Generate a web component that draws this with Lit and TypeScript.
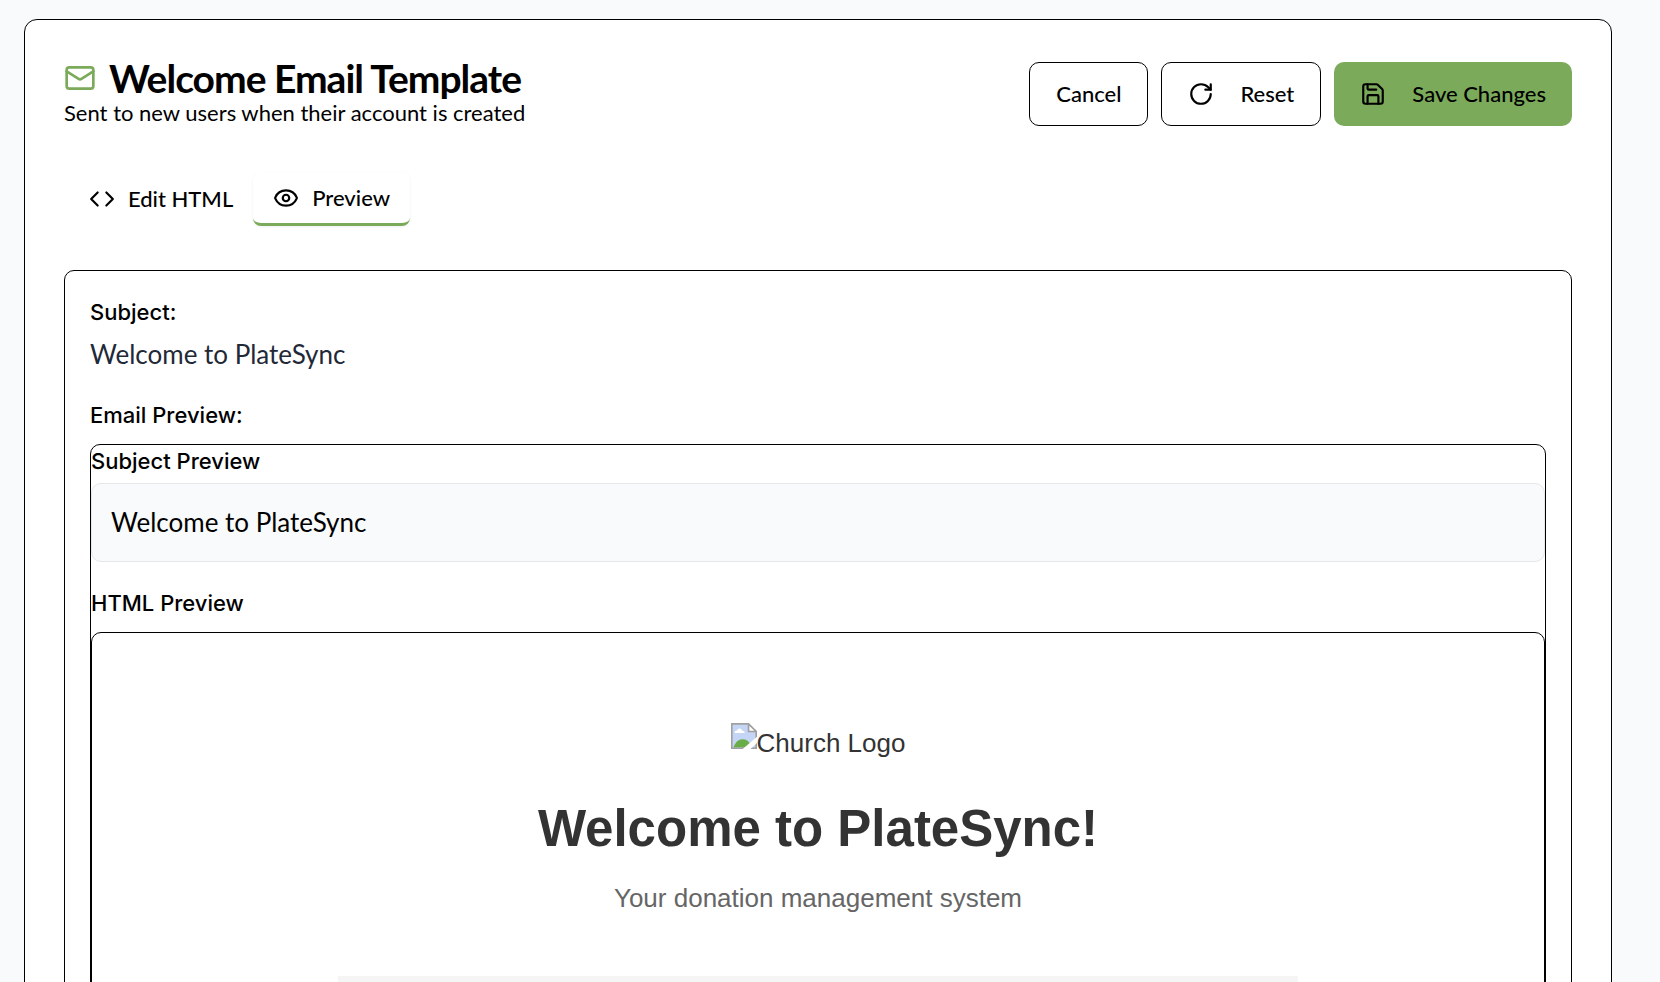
import { LitElement, html, css, svg } from "lit";
import { customElement, state } from "lit/decorators.js";

const stroked = (size: string, body: unknown) => html`
  <svg class="icon ${size}" viewBox="0 0 24 24" fill="none" stroke="currentColor" stroke-width="2"
    stroke-linecap="round" stroke-linejoin="round" aria-hidden="true">${body}</svg>`;

const mail = svg`<rect width="20" height="16" x="2" y="4" rx="2"/><path d="m22 7-8.97 5.7a1.94 1.94 0 0 1-2.06 0L2 7"/>`;
const code = svg`<path d="m16 18 6-6-6-6"/><path d="m8 6-6 6 6 6"/>`;
const eye = svg`<path d="M2.062 12.348a1 1 0 0 1 0-.696 10.75 10.75 0 0 1 19.876 0 1 1 0 0 1 0 .696 10.75 10.75 0 0 1-19.876 0"/><circle cx="12" cy="12" r="3"/>`;
const rotate = svg`<path d="M21 12a9 9 0 1 1-9-9c2.52 0 4.93 1 6.74 2.74L21 8"/><path d="M21 3v5h-5"/>`;
const save = svg`<path d="M15.2 3a2 2 0 0 1 1.4.6l3.8 3.8a2 2 0 0 1 .6 1.4V19a2 2 0 0 1-2 2H5a2 2 0 0 1-2-2V5a2 2 0 0 1 2-2z"/><path d="M17 21v-7a1 1 0 0 0-1-1H8a1 1 0 0 0-1 1v7"/><path d="M7 3v4a1 1 0 0 0 1 1h7"/>`;

@customElement("email-preview")
export class EmailPreview extends LitElement {
  static styles = css`
    :host {
      display: block;
      padding: 90px 32px 0;
      font-family: "Liberation Sans", Arial, sans-serif;
      font-size: 26px;
      line-height: 40px;
      color: #333;
      text-align: center;
    }
    .logo { display: flex; justify-content: center; align-items: flex-start; }
    .missing { width: 26px; height: 26px; flex: none; }
    h2 { margin: 25px 0 0; font-size: 51px; line-height: 82px; font-weight: 700; }
    .tagline { margin: 8px 0 0; color: #666; }
    .content { max-width: 960px; height: 320px; margin: 58px auto 0; background: #f5f5f5; }
  `;

  render() {
    return html`
      <div class="logo">
        <svg class="missing" viewBox="0 0 16 16" aria-hidden="true">
          <path d="M.5.5h10.300l4.700 4.700v10.300H.5z" fill="#c5d5f5"/>
          <path d="M2.200 6.200c0-1.100.8-1.600 1.500-1.500.3-1.700 2.700-1.700 3-.1 1 0 1.700.6 1.700 1.600z" fill="#fff"/>
          <path d="M1.500 15c1.200-3.200 3.200-5 5.500-5 2.200 0 4 1.200 5 3l-2.500 2z" fill="#68ad48"/>
          <path d="M10.800.5v4.700h4.700z" fill="#fff"/>
          <path d="M.5 15.500V.5h10.300l4.700 4.700v10.300zM10.800.5v4.700h4.700" fill="none" stroke="#a0a0a0"/>
          <path d="M16 8.500v3.800L12 16H7.200z" fill="#fff"/>
        </svg>
        <span>Church Logo</span>
      </div>
      <h2>Welcome to PlateSync!</h2>
      <p class="tagline">Your donation management system</p>
      <div class="content"></div>
    `;
  }
}

@customElement("app-root")
export class AppRoot extends LitElement {
  static styles = css`
    * { box-sizing: border-box; }
    :host {
      display: block;
      box-sizing: border-box;
      height: 100vh;
      overflow: hidden;
      padding: 19px 48px 0 24px;
      background: #f8fafc;
      color: #000;
      font-family: Lato, sans-serif;
      font-size: 22px;
      line-height: 32px;
    }
    h1, h2, p { margin: 0; }
    .icon { flex: none; display: block; }
    .small { width: 26px; height: 26px; }
    .large { width: 32px; height: 32px; }
    .card { padding: 39px; border: 1px solid #000; border-radius: 13px; background: #fff; }
    .header { display: flex; align-items: center; justify-content: space-between; gap: 26px; }
    .title { display: flex; align-items: center; gap: 13px; }
    .title .icon { color: #7bab5a; }
    h1 { font-size: 39px; line-height: 38px; font-weight: 700; letter-spacing: -1px; }
    .actions { display: flex; gap: 13px; }
    button { font: inherit; color: inherit; background: none; border: 0; cursor: pointer; white-space: nowrap; }
    .action {
      display: flex; align-items: center; gap: 26px; height: 64px; padding: 0 26px;
      border: 1px solid #000; border-radius: 10px; background: #fff; font-weight: 500;
    }
    .primary { background: #7bab5a; border: 0; }
    .tabs { display: flex; padding: 6px 5px; margin-top: 37px; }
    .tab {
      display: flex; align-items: center; gap: 13px; height: 54px; padding: 0 20px;
      border-radius: 8px; font-weight: 500;
    }
    .tab[aria-selected="true"] {
      border-bottom: 3px solid #7bab5a; background: #fff; box-shadow: 0 1px 3px rgba(0, 0, 0, 0.06);
    }
    .panel { margin-top: 38px; padding: 25px; border: 1px solid #000; border-radius: 10px; }
    .label { font-family: Inter, sans-serif; font-size: 22px; font-weight: 500; }
    .value { margin: 7px 0 26px; font-size: 26px; line-height: 38px; color: #1f2937; }
    .frame { margin-top: 13px; border: 1px solid #000; border-radius: 10px; }
    .subject {
      margin: 6px 0 25px; padding: 19px; border: 1px solid #e5e7eb; border-radius: 10px;
      background: #f9fafb; font-size: 26px; line-height: 39px;
    }
    .mail { display: block; margin-top: 13px; border: 1px solid #000; border-radius: 10px; }
  `;

  @state() private tab = "preview";

  private tabButton(id: string, icon: unknown, text: string) {
    return html`<button class="tab" role="tab" aria-selected=${this.tab === id ? "true" : "false"}
      @click=${() => (this.tab = id)}>${stroked("small", icon)}${text}</button>`;
  }

  render() {
    return html`
      <main class="card">
        <header class="header">
          <div>
            <div class="title">${stroked("large", mail)}<h1>Welcome Email Template</h1></div>
            <p>Sent to new users when their account is created</p>
          </div>
          <div class="actions">
            <button class="action">Cancel</button>
            <button class="action">${stroked("small", rotate)}Reset</button>
            <button class="action primary">${stroked("small", save)}Save Changes</button>
          </div>
        </header>
        <div class="tabs" role="tablist">
          ${this.tabButton("edit", code, "Edit HTML")}
          ${this.tabButton("preview", eye, "Preview")}
        </div>
        <section class="panel" role="tabpanel">
          <h2 class="label">Subject:</h2>
          <p class="value">Welcome to PlateSync</p>
          <h2 class="label">Email Preview:</h2>
          <div class="frame">
            <p class="label">Subject Preview</p>
            <p class="subject">Welcome to PlateSync</p>
            <p class="label">HTML Preview</p>
            <email-preview class="mail"></email-preview>
          </div>
        </section>
      </main>
    `;
  }
}
